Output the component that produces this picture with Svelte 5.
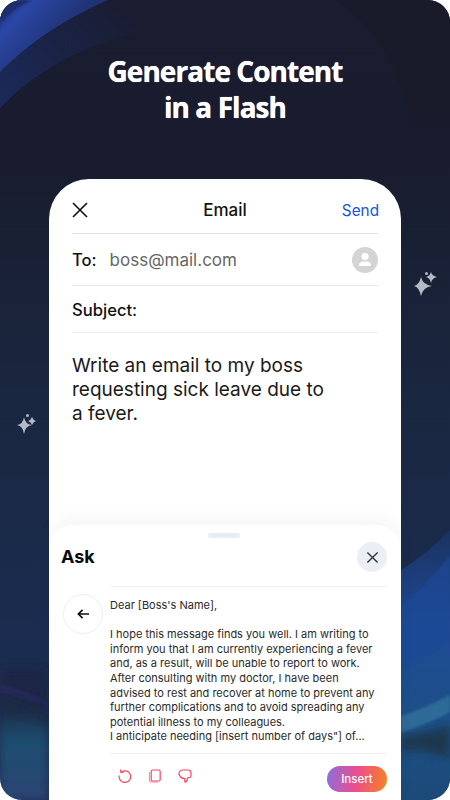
<script>
  const body = [
    "I hope this message finds you well. I am writing to",
    "inform you that I am currently experiencing a fever",
    "and, as a result, will be unable to report to work.",
    "After consulting with my doctor, I have been",
    "advised to rest and recover at home to prevent any",
    "further complications and to avoid spreading any",
    "potential illness to my colleagues.",
    "I anticipate needing [insert number of days\"] of..."
  ];
</script>

<div class="screen">
  <svg class="bg" viewBox="0 0 450 800" preserveAspectRatio="none" aria-hidden="true">
    <defs>
      <linearGradient id="base" x1="0" y1="0" x2="0" y2="1">
        <stop offset="0" stop-color="#1a1c30"/>
        <stop offset="0.2" stop-color="#191c2e"/>
        <stop offset="0.5" stop-color="#1a2740"/>
        <stop offset="0.8" stop-color="#1a2c50"/>
        <stop offset="1" stop-color="#1c3052"/>
      </linearGradient>
      <linearGradient id="blue" x1="0" y1="0" x2="1" y2="0.6">
        <stop offset="0" stop-color="#203278"/>
        <stop offset="0.22" stop-color="#2b47a6"/>
        <stop offset="0.6" stop-color="#213578"/>
        <stop offset="1" stop-color="#1a2660"/>
      </linearGradient>
      <linearGradient id="band" x1="0" y1="1" x2="1" y2="0.3">
        <stop offset="0" stop-color="#1b2a5c"/>
        <stop offset="1" stop-color="#1a1c30"/>
      </linearGradient>
      <linearGradient id="rightA" x1="0" y1="0" x2="0" y2="1">
        <stop offset="0" stop-color="#1a3260"/>
        <stop offset="0.35" stop-color="#1f4a96"/>
        <stop offset="0.7" stop-color="#1d5088"/>
        <stop offset="1" stop-color="#1c4a78"/>
      </linearGradient>
      <linearGradient id="leftA" x1="0" y1="0" x2="0" y2="1">
        <stop offset="0" stop-color="#1a2444"/>
        <stop offset="0.3" stop-color="#1c2b48"/>
        <stop offset="0.55" stop-color="#1e4e70"/>
        <stop offset="1" stop-color="#2c4474"/>
      </linearGradient>
      <filter id="soft"><feGaussianBlur stdDeviation="1"/></filter>
      <filter id="softer"><feGaussianBlur stdDeviation="4"/></filter>
    </defs>
    <rect width="450" height="800" fill="url(#base)"/>
    <path d="M335 0 C385 35 400 75 412 125 L450 125 L450 0 Z" fill="#1a1b2a"/>
    <path d="M0 108 C35 72 75 48 150 28 L150 0 L0 0 Z" fill="url(#band)"/>
    <path d="M0 72 C28 44 62 20 108 0 L0 0 Z" fill="url(#blue)"/>
    <path d="M0 24 C8 14 16 8 32 0 L0 0 Z" fill="#1d2d6c" filter="url(#soft)"/>
    <path d="M0 670 H48 V800 H0 Z" fill="url(#leftA)" filter="url(#softer)"/>
    <path d="M0 684 C18 688 34 694 50 704 L50 709 C34 701 18 697 0 693 Z" fill="#28295a" opacity=".8" filter="url(#soft)"/>
    <path d="M0 696 C18 700 34 706 50 716 L50 724 C34 716 18 710 0 708 Z" fill="#1a2a44" opacity=".8" filter="url(#softer)"/>
    <path d="M401 570 C420 558 435 545 450 530 L450 800 L401 800 Z" fill="url(#rightA)"/>
    <path d="M401 606 C420 590 435 575 450 555 L450 640 L401 670 Z" fill="#1f4896" opacity=".7" filter="url(#soft)"/>
    <path d="M401 716 C420 710 435 703 450 695 L450 712 C435 720 420 727 401 733 Z" fill="#2d6b98" filter="url(#soft)"/>
    <path d="M401 736 C420 734 435 730 450 724 L450 760 C435 752 420 750 401 752 Z" fill="#1b3850" filter="url(#softer)"/>
    <g fill="#b4bac6">
      <path d="M421 277 Q423 285 432 286 Q423 287 421 296 Q419 287 414 286 Q419 285 421 277 Z"/>
      <path d="M431 272 Q432 276 437 277 Q432 278 431 283 Q430 278 426 277 Q430 276 431 272 Z"/>
      <circle cx="426.500" cy="273.500" r="1.500"/>
      <path d="M24 417 Q25 424 32 425 Q25 426 24 434 Q23 426 17 425 Q23 424 24 417 Z"/>
      <path d="M32 417 Q33 420 36 421 Q33 422 32 425 Q31 422 28 421 Q31 420 32 417 Z"/>
      <circle cx="27.500" cy="415.500" r="1.500"/>
    </g>
  </svg>

  <h1>Generate Content<br />in a Flash</h1>

  <section class="phone">
    <header class="top">
      <svg class="close" viewBox="0 0 16 16" aria-hidden="true"><path d="M1 1 L15 15 M15 1 L1 15"/></svg>
      <span class="heading">Email</span>
      <span class="send">Send</span>
    </header>
    <div class="row to">
      <span class="label">To:</span>
      <span class="addr">boss@mail.com</span>
      <span class="avatar">
        <svg viewBox="0 0 26 26" aria-hidden="true">
          <circle cx="13" cy="9.500" r="3.600" fill="#fff"/>
          <path d="M7 19 Q7 14.500 11 14.500 H15 Q19 14.500 19 19 Z" fill="#fff"/>
        </svg>
      </span>
    </div>
    <div class="row subject"><span class="label">Subject:</span></div>
    <p class="prompt">Write an email to my boss<br />requesting sick leave due to<br />a fever.</p>

    <section class="sheet">
      <div class="grip"></div>
      <div class="sheet-head">
        <h2>Ask</h2>
        <span class="dismiss">
          <svg viewBox="0 0 14 14" aria-hidden="true"><path d="M1.500 1.500 L12.500 12.500 M12.500 1.500 L1.500 12.500"/></svg>
        </span>
      </div>
      <div class="answer">
        <span class="back">
          <svg viewBox="0 0 14 12" aria-hidden="true"><path d="M13 6 H1.500 M6 1.500 L1.500 6 L6 10.500"/></svg>
        </span>
        <div class="letter">
          <p class="greet">Dear [Boss's Name],</p>
          <p class="lines">{#each body as line}<span>{line}</span>{/each}</p>
        </div>
      </div>
      <footer class="actions">
        <div class="icons">
          <svg viewBox="0 0 14 14" aria-hidden="true"><path d="M2.500 0.500 L3 3.500 L6 3 M3 3.300 A5.800 5.800 0 1 1 1.200 6.500"/></svg>
          <svg viewBox="0 0 14 14" aria-hidden="true"><rect x="3.200" y="1" width="9" height="11" rx="1.500"/><path d="M1.500 3 V11.500 Q1.500 13 3 13 H10" stroke-opacity=".6"/></svg>
          <svg viewBox="0 0 14 14" aria-hidden="true"><path d="M4.500 1 H10.500 A2.500 2.500 0 0 1 13 3.500 V7 A1.500 1.500 0 0 1 11.500 8.500 H10 L8 13 L6.800 12.700 L6.800 9.500 A6 6 0 0 1 1 5 A4 4 0 0 1 4.500 1 Z"/></svg>
        </div>
        <span class="insert">Insert</span>
      </footer>
    </section>
  </section>
</div>

<style>
  :global(body) { margin: 0; background: #fff; }
  .screen {
    position: relative;
    width: 450px;
    height: 800px;
    overflow: hidden;
    border-radius: 22px;
    display: flex;
    flex-direction: column;
    align-items: center;
    font-family: "Inter", "Liberation Sans", sans-serif;
    color: #111;
  }
  .bg { position: absolute; inset: 0; width: 100%; height: 100%; }
  h1 {
    position: relative;
    margin: 53px 0 0;
    font: 700 28px/36px "Open Sans", sans-serif;
    letter-spacing: -0.95px;
    text-align: center;
    color: #fff;
    text-shadow: 0 0 .7px #fff;
    height: 126px;
  }
  .phone {
    position: relative;
    width: 352px;
    height: 621px;
    box-sizing: border-box;
    background: #fff;
    border-radius: 40px 40px 0 0;
    padding: 0 23px;
    display: flex;
    flex-direction: column;
  }
  .top {
    height: 55px;
    padding-top: 8px;
    display: flex;
    align-items: center;
    justify-content: space-between;
    border-bottom: 1px solid #e2e2e2;
    position: relative;
    box-sizing: border-box;
  }
  .close { width: 16px; height: 16px; fill: none; stroke: #111; stroke-width: 1.600; }
  .heading {
    position: absolute;
    left: 0; right: 0;
    text-align: center;
    font-size: 17px;
    font-weight: 500;
  }
  .send { font-size: 15.300px; color: #1455e0; margin-right: -1px; }
  .row {
    display: flex;
    align-items: center;
    border-bottom: 1px solid #e6e6e6;
    box-sizing: border-box;
  }
  .to { height: 52px; }
  .subject { height: 47px; padding-top: 1px; border-bottom-color: #eee; }
  .label { font-size: 16.600px; font-weight: 500; }
  .addr { margin-left: 13px; font-size: 17px; color: #666; flex: 1; }
  .avatar { width: 26px; height: 26px; border-radius: 50%; background: #d4d4d4; }
  .avatar svg { display: block; width: 26px; height: 26px; }
  .prompt {
    margin: 21px 0 0;
    font-size: 19px;
    line-height: 24px;
    color: #1a1a1a;
  }
  .sheet {
    position: absolute;
    left: 0; right: 0; bottom: 0;
    height: 275px;
    box-sizing: border-box;
    background: #fff;
    border-radius: 24px 24px 0 0;
    box-shadow: 0 -8px 16px rgba(0, 0, 0, .04);
    padding: 8px 14px 0 12px;
    display: flex;
    flex-direction: column;
  }
  .grip { width: 32px; height: 5px; border-radius: 3px; background: #e8ecf4; margin: 0 auto; }
  .sheet-head {
    display: flex;
    justify-content: space-between;
    align-items: center;
    height: 30px;
    margin-top: 4px;
  }
  h2 { margin: 0; font: 700 18px/1 "Inter", sans-serif; color: #0a0a0a; }
  .dismiss {
    width: 30px; height: 30px; border-radius: 50%;
    background: #eceef6;
    display: flex; align-items: center; justify-content: center;
  }
  .dismiss svg { width: 13px; height: 13px; fill: none; stroke: #333; stroke-width: 1.500; }
  .answer {
    display: flex;
    margin-top: 14px;
    margin-left: 2px;
  }
  .back {
    width: 38px; height: 38px;
    margin-top: 8px;
    border: 1px solid #eceef6;
    border-radius: 50%;
    display: flex; align-items: center; justify-content: center;
    flex: none;
  }
  .back svg { width: 13px; height: 12px; fill: none; stroke: #111; stroke-width: 1.800; }
  .letter {
    margin-left: 7px;
    flex: 1;
    border-top: 1px solid #eef0f6;
    padding-top: 11px;
    font-size: 11px;
    line-height: 14.600px;
    color: #2a2a2a;
    height: 168px;
    border-bottom: 1px solid #eef0f6;
    box-sizing: border-box;
    white-space: nowrap;
  }
  .letter p { margin: 0; }
  .greet { margin-bottom: 14.600px !important; }
  .lines span { display: block; }
  .actions {
    display: flex;
    justify-content: space-between;
    align-items: flex-start;
    margin-left: 49px;
    margin-top: 12px;
  }
  .icons { display: flex; gap: 16px; margin-left: 8px; margin-top: 3px; }
  .icons svg { width: 14px; height: 14px; fill: none; stroke: #fb4560; stroke-width: 1.200; }
  .insert {
    width: 60px; height: 26px;
    border-radius: 13px;
    background: linear-gradient(100deg, #8a6ee0 0%, #ee4d8a 50%, #f5861f 100%);
    color: #fff;
    font-size: 11.500px;
    font-weight: 500;
    display: flex; align-items: center; justify-content: center;
  }
</style>
